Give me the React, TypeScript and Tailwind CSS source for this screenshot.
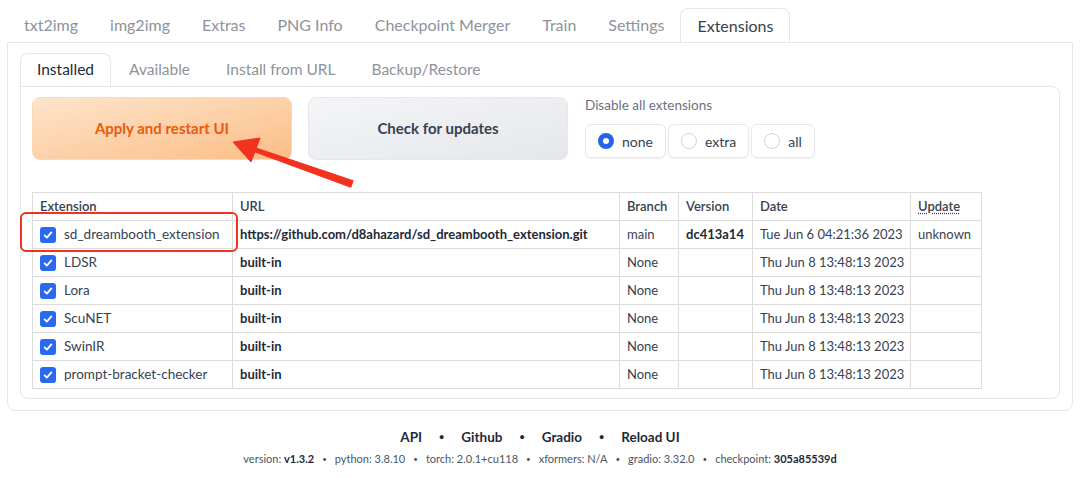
import React from "react";

const TOP_TABS = ["txt2img", "img2img", "Extras", "PNG Info", "Checkpoint Merger", "Train", "Settings", "Extensions"];
const SUB_TABS = ["Installed", "Available", "Install from URL", "Backup/Restore"];

const ROWS = [
  { name: "sd_dreambooth_extension", url: "https://github.com/d8ahazard/sd_dreambooth_extension.git", branch: "main", version: "dc413a14", date: "Tue Jun 6 04:21:36 2023", update: "unknown" },
  { name: "LDSR", url: "built-in", branch: "None", version: "", date: "Thu Jun 8 13:48:13 2023", update: "" },
  { name: "Lora", url: "built-in", branch: "None", version: "", date: "Thu Jun 8 13:48:13 2023", update: "" },
  { name: "ScuNET", url: "built-in", branch: "None", version: "", date: "Thu Jun 8 13:48:13 2023", update: "" },
  { name: "SwinIR", url: "built-in", branch: "None", version: "", date: "Thu Jun 8 13:48:13 2023", update: "" },
  { name: "prompt-bracket-checker", url: "built-in", branch: "None", version: "", date: "Thu Jun 8 13:48:13 2023", update: "" },
];

function Checkbox() {
  return (
    <span className="flex h-4 w-4 shrink-0 items-center justify-center rounded-[3px] bg-[#2869f0]">
      <svg viewBox="0 0 16 16" className="h-3 w-3" fill="none" stroke="white" strokeWidth="2.4" strokeLinecap="round" strokeLinejoin="round">
        <path d="M3.5 8.5l3 3 6-7" />
      </svg>
    </span>
  );
}

function Radio({ label, checked }: { label: string; checked?: boolean }) {
  return (
    <div className="flex h-[34px] items-center gap-2 rounded-md border border-[#e5e7eb] bg-white px-3 shadow-[0_1px_2px_rgba(0,0,0,0.06)]">
      {checked ? (
        <span className="flex h-4 w-4 items-center justify-center rounded-full bg-[#2563eb]">
          <span className="h-[6px] w-[6px] rounded-full bg-white" />
        </span>
      ) : (
        <span className="h-4 w-4 rounded-full border border-[#d1d5db] bg-white" />
      )}
      <span className="text-[14px] text-[#374151]">{label}</span>
    </div>
  );
}

function Dot() {
  return <span className="text-[9px] leading-[18px]">•</span>;
}

export default function App() {
  const cell = "border border-[#dcdcdc] px-[7px] h-[28px] align-middle";
  return (
    <div className="relative h-[478px] w-[1080px] overflow-hidden bg-white font-['Lato','Open_Sans',sans-serif] text-[#374151]">
      {/* top tabs */}
      <div className="flex pl-2 pt-2">
        {TOP_TABS.map((t) => (
          <div
            key={t}
            className={
              t === "Extensions"
                ? "relative z-10 -mb-px flex h-[34px] items-center rounded-t-lg border border-b-0 border-[#e5e7eb] bg-white px-4 text-[16px] text-[#374151]"
                : "flex h-[34px] items-center px-4 text-[16px] text-[#8d939c]"
            }
          >
            {t}
          </div>
        ))}
      </div>

      <div className="mx-[7px] rounded-b-lg border border-[#e5e7eb] px-3 pb-[11px] pt-[10px]">
        {/* sub tabs */}
        <div className="flex">
          {SUB_TABS.map((t) => (
            <div
              key={t}
              className={
                t === "Installed"
                  ? "relative z-10 -mb-px flex h-[33px] items-center rounded-t-lg border border-b-0 border-[#e5e7eb] bg-white px-4 text-[15.5px] text-[#1f2937]"
                  : "flex h-[33px] items-center px-[18px] text-[15.5px] text-[#8d939c]"
              }
            >
              {t}
            </div>
          ))}
        </div>

        <div className="rounded-b-lg rounded-tr-lg border border-[#e5e7eb] pb-[9px] pl-[11px] pt-[10px]">
          <div className="flex gap-4">
            <button className="flex h-[63px] w-[260px] items-center justify-center rounded-lg border border-[#fcd9b5] bg-gradient-to-br from-[#fde5cb] to-[#fbbd86] text-[15px] font-bold text-[#ea5a0c]">
              Apply and restart UI
            </button>
            <button className="flex h-[63px] w-[260px] items-center justify-center rounded-lg border border-[#e5e7eb] bg-gradient-to-br from-[#f4f5f7] to-[#e5e7eb] text-[15px] font-bold text-[#374151]">
              Check for updates
            </button>
            <div className="ml-px flex flex-col">
              <span className="h-[27px] text-[13.5px] leading-[16px] text-[#6b7280]">Disable all extensions</span>
              <div className="flex gap-[2px]">
                <Radio label="none" checked />
                <Radio label="extra" />
                <Radio label="all" />
              </div>
            </div>
          </div>

          <table className="mt-[32px] w-[949px] table-fixed border-collapse text-left text-[13px]">
            <colgroup>
              <col className="w-[200px]" />
              <col className="w-[387px]" />
              <col className="w-[59px]" />
              <col className="w-[74px]" />
              <col className="w-[158px]" />
              <col className="w-[71px]" />
            </colgroup>
            <thead>
              <tr className="text-[#374151]">
                <th className={cell + " font-semibold"}>Extension</th>
                <th className={cell + " font-semibold"}>URL</th>
                <th className={cell + " font-semibold"}>Branch</th>
                <th className={cell + " font-semibold"}>Version</th>
                <th className={cell + " font-semibold"}>Date</th>
                <th className={cell + " font-semibold"}>
                  <span className="underline decoration-dotted underline-offset-2">Update</span>
                </th>
              </tr>
            </thead>
            <tbody>
              {ROWS.map((r) => (
                <tr key={r.name}>
                  <td className={cell}>
                    <div className="flex items-center gap-2">
                      <Checkbox />
                      <span className="whitespace-nowrap text-[13.5px]">{r.name}</span>
                    </div>
                  </td>
                  <td className={cell + " whitespace-nowrap font-bold text-[#1f2937]"}>{r.url}</td>
                  <td className={cell}>{r.branch}</td>
                  <td className={cell + " font-bold text-[#1f2937]"}>{r.version}</td>
                  <td className={cell + " whitespace-nowrap"}>{r.date}</td>
                  <td className={cell}>{r.update}</td>
                </tr>
              ))}
            </tbody>
          </table>
        </div>
      </div>

      {/* footer */}
      <div className="mt-[17px] flex items-center justify-center gap-[17px] text-[13.5px] font-bold leading-[18px] text-[#1f2937]">
        <span>API</span>
        <Dot />
        <span>Github</span>
        <Dot />
        <span>Gradio</span>
        <Dot />
        <span>Reload UI</span>
      </div>
      <div className="mt-[5px] flex items-center justify-center gap-[8px] text-[11px] text-[#4b5563]">
        <span>version: <b className="text-[#1f2937]">v1.3.2</b></span>
        <span className="text-[8px]">•</span>
        <span>python: 3.8.10</span>
        <span className="text-[8px]">•</span>
        <span>torch: 2.0.1+cu118</span>
        <span className="text-[8px]">•</span>
        <span>xformers: N/A</span>
        <span className="text-[8px]">•</span>
        <span>gradio: 3.32.0</span>
        <span className="text-[8px]">•</span>
        <span>checkpoint: <b className="text-[#1f2937]">305a85539d</b></span>
      </div>

      {/* annotation overlay */}
      <div className="pointer-events-none absolute left-[20px] top-[212px] h-[40px] w-[218px] rounded-md border-[2.5px] border-[#f2321e]" />
      <svg className="pointer-events-none absolute left-0 top-0" width="1080" height="478">
        <polygon
          points="233,142 260,138 256.3,148.1 353.2,180.7 350.8,187.3 254.9,151.9 251,162"
          fill="#f2321e"
          strokeLinejoin="round"
          stroke="#f2321e"
          strokeWidth="1"
        />
      </svg>
    </div>
  );
}
